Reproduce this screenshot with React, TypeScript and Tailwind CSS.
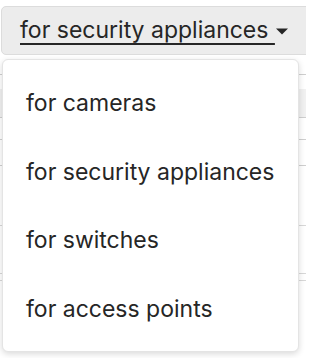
import React from "react";

const items = ["for cameras", "for security appliances", "for switches", "for access points"];

export default function App() {
  const font = { fontFamily: "Inter, 'Noto Sans', sans-serif" };
  return (
    <div className="relative w-[306px] h-[358px] overflow-hidden bg-white text-[#262626]" style={font}>
      <div className="pt-[6px] pl-[1px]">
        <div className="h-[49px] w-[330px] rounded-[5px] border border-[#dcdcdc] bg-[#ececec] flex items-center pl-[18px]">
          <span className="text-[23px] leading-none underline decoration-[2px] underline-offset-[5px] text-[#262626] whitespace-pre">
            {"for security appliances "}
          </span>
          <svg width="12" height="7" viewBox="0 0 12 7" className="ml-[1px] mt-[1px]">
            <path d="M0 0.5 L12 0.5 L6 6.5 Z" fill="#262626" />
          </svg>
        </div>
      </div>
      <div className="flex flex-col">
        <div className="h-[20px] border-b border-[#cfcfcf]" />
        <div className="h-[43px] border-b border-[#cfcfcf] flex flex-col">
          <div className="h-[14px]" />
          <div className="flex-1 bg-[#f1f1f1]" />
        </div>
        <div className="h-[22px] border-b border-[#cfcfcf]" />
        <div className="h-[26px] border-b border-[#cfcfcf]" />
        <div className="h-[60px] border-b border-[#d8d8d8]" />
        <div className="h-[48px] border-b border-[#d8d8d8]" />
        <div className="h-[7px] border-b border-[#d8d8d8]" />
      </div>
      <div className="absolute left-[2px] top-[59px] w-[297px] h-[293px] rounded-[6px] border border-[#e4e4e4] bg-white shadow-[0_2px_6px_rgba(0,0,0,0.15)] py-[9px]">
        {items.map((t) => (
          <div key={t} className="h-[68.5px] flex items-center pl-[23px] text-[23px] text-[#262626]">
            {t}
          </div>
        ))}
      </div>
    </div>
  );
}
